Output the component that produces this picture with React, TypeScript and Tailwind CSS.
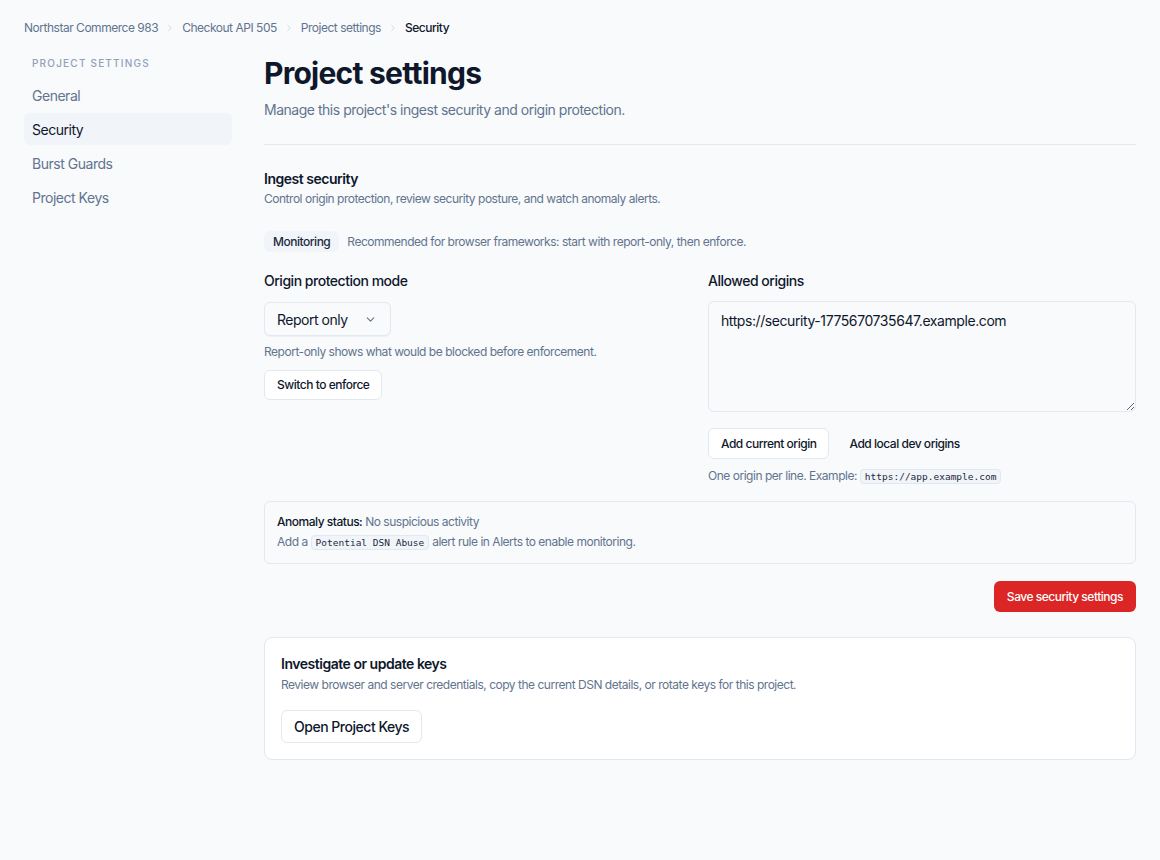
import React from "react";
import { ChevronDown, ChevronRight } from "lucide-react";

const navItems = ["General", "Security", "Burst Guards", "Project Keys"];

const Code = ({ children }: { children: React.ReactNode }) => (
  <code className="rounded border border-slate-200 bg-slate-100 px-1 py-[1px] font-['DejaVu_Sans_Mono',monospace] text-[9.5px] tracking-normal text-slate-800">
    {children}
  </code>
);

export default function App() {
  return (
    <div className="min-h-[860px] bg-[#f8fafc] px-6 pt-5 font-['Inter',sans-serif] tracking-[-0.03em] text-slate-900">
      <nav className="flex items-center gap-[7px] text-[12px] leading-4 text-slate-500">
        <span>Northstar Commerce 983</span>
        <ChevronRight size={10} className="text-slate-300" />
        <span>Checkout API 505</span>
        <ChevronRight size={10} className="text-slate-300" />
        <span>Project settings</span>
        <ChevronRight size={10} className="text-slate-300" />
        <span className="font-medium text-slate-900">Security</span>
      </nav>

      <div className="mt-[19px] flex gap-8">
        <aside className="w-[208px] shrink-0">
          <div className="px-2 text-[10px] font-medium uppercase leading-4 tracking-[0.12em] text-slate-400">
            Project settings
          </div>
          <ul className="mt-2 flex flex-col gap-[2px]">
            {navItems.map((item) => (
              <li
                key={item}
                className={
                  item === "Security"
                    ? "flex h-8 items-center rounded-md bg-slate-100 px-2 text-[14px] text-slate-900"
                    : "flex h-8 items-center rounded-md px-2 text-[14px] text-slate-500"
                }
              >
                {item}
              </li>
            ))}
          </ul>
        </aside>

        <main className="w-[872px]">
          <h1 className="text-[30px] font-bold leading-9 tracking-[-0.025em] text-slate-900">
            Project settings
          </h1>
          <p className="mt-[9px] text-[14px] leading-5 text-slate-500">
            Manage this project's ingest security and origin protection.
          </p>
          <div className="mt-6 border-t border-slate-200" />

          <section className="pt-6">
            <h2 className="text-[14px] font-semibold leading-5">Ingest security</h2>
            <p className="mt-[2px] text-[12px] leading-4 text-slate-500">
              Control origin protection, review security posture, and watch anomaly alerts.
            </p>

            <div className="mt-6 flex items-center gap-2">
              <span className="rounded-md bg-slate-100 px-[9px] py-[3px] text-[12px] font-medium leading-[15px] text-slate-800">
                Monitoring
              </span>
              <span className="text-[12px] leading-4 text-slate-500">
                Recommended for browser frameworks: start with report-only, then enforce.
              </span>
            </div>

            <div className="mt-[19px] grid grid-cols-2 gap-4">
              <div>
                <div className="text-[14px] font-medium leading-5">Origin protection mode</div>
                <button className="mt-[11px] flex h-[34px] w-[127px] items-center justify-between rounded-md border border-slate-200 bg-[#f8fafc] pl-3 pr-[13px] text-[14px] text-slate-900 shadow-[0_1px_1px_rgba(15,23,42,0.04)]">
                  Report only
                  <ChevronDown size={13} className="text-slate-500" />
                </button>
                <p className="mt-2 text-[12px] leading-4 text-slate-500">
                  Report-only shows what would be blocked before enforcement.
                </p>
                <button className="mt-[10px] h-[30px] rounded-md border border-slate-200 bg-white px-3 text-[12px] font-medium text-slate-900">
                  Switch to enforce
                </button>
              </div>

              <div>
                <div className="text-[14px] font-medium leading-5">Allowed origins</div>
                <textarea
                  className="mt-[10px] block h-[111px] w-full resize-y rounded-md border border-slate-200 bg-[#f8fafc] px-3 py-[9px] text-[14px] leading-5 tracking-[-0.03em] text-slate-900 outline-none"
                  defaultValue="https://security-1775670735647.example.com"
                />
                <div className="mt-4 flex items-center gap-2">
                  <button className="h-[31px] rounded-md border border-slate-200 bg-white px-3 text-[12px] font-medium text-slate-900">
                    Add current origin
                  </button>
                  <button className="h-[31px] rounded-md px-3 text-[12px] font-medium text-slate-900">
                    Add local dev origins
                  </button>
                </div>
                <p className="mt-[9px] text-[12px] leading-4 text-slate-500">
                  One origin per line. Example: <Code>https://app.example.com</Code>
                </p>
              </div>
            </div>

            <div className="mt-4 rounded-md border border-slate-200 bg-[#f8fafc] px-3 py-[10px]">
              <p className="text-[12px] leading-5 text-slate-500">
                <span className="font-medium text-slate-900">Anomaly status:</span> No suspicious
                activity
              </p>
              <p className="text-[12px] leading-5 text-slate-500">
                Add a <Code>Potential DSN Abuse</Code> alert rule in Alerts to enable monitoring.
              </p>
            </div>

            <div className="mt-[17px] flex justify-end">
              <button className="h-[31px] rounded-md bg-[#dc2626] px-[13px] text-[12px] font-medium text-white">
                Save security settings
              </button>
            </div>
          </section>

          <section className="mt-[25px] rounded-lg border border-slate-200 bg-white px-4 pb-4 pt-4">
            <h3 className="text-[14px] font-semibold leading-5">Investigate or update keys</h3>
            <p className="mt-[3px] text-[12px] leading-4 text-slate-500">
              Review browser and server credentials, copy the current DSN details, or rotate keys for
              this project.
            </p>
            <button className="mt-[17px] h-[33px] rounded-md border border-slate-200 bg-white px-3 text-[14px] font-medium text-slate-900">
              Open Project Keys
            </button>
          </section>
        </main>
      </div>
    </div>
  );
}
